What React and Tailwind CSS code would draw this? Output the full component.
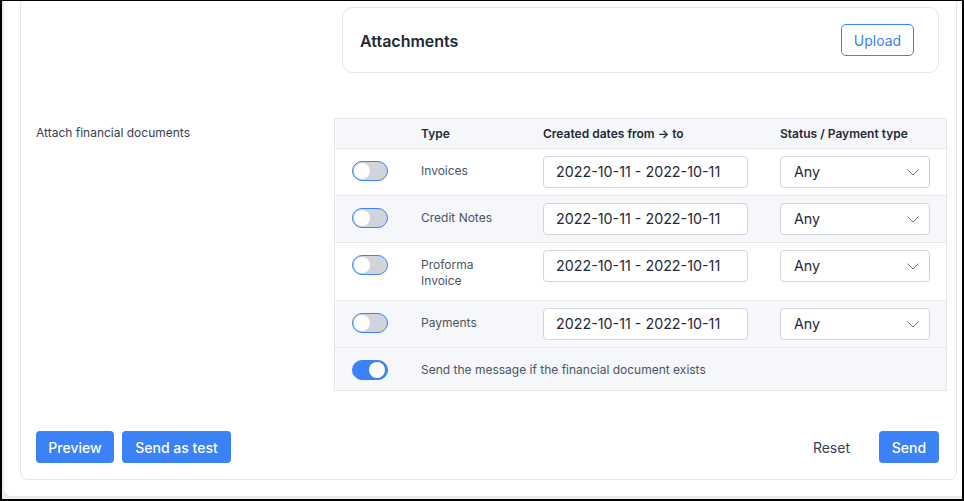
import React from "react";

function Toggle({ on }) {
  return on ? (
    <div className="w-9 h-5 rounded-full bg-[#3b82f6] border border-[#3b82f6] flex items-center justify-end pr-[2px]">
      <div className="w-[16px] h-[16px] rounded-full bg-white" />
    </div>
  ) : (
    <div className="w-9 h-5 rounded-full bg-[#d1d5db] border-[1.5px] border-[#3b82f6] flex items-center pl-[1px]">
      <div className="w-[16px] h-[16px] rounded-full bg-white" />
    </div>
  );
}

function Chevron() {
  return (
    <svg width="12" height="7" viewBox="0 0 12 7" fill="none">
      <polyline points="0.5,0.5 6,6 11.5,0.5" stroke="#6b7280" strokeWidth="1" />
    </svg>
  );
}

function Row({ label, gray }) {
  return (
    <div className={"flex border-t border-[#e5e7eb] " + (gray ? "bg-[#f6f7fa]" : "bg-white")}>
      <div className="w-[70px] pl-[17px] pt-3">
        <Toggle on={false} />
      </div>
      <div className="w-[122px] px-4 pt-[14px] pb-[11px] text-[12px] leading-4 text-[#4b5563]">{label}</div>
      <div className="w-[237px] pl-4 pt-[7px] pb-[7px]">
        <div className="w-[205px] h-8 border border-[#d1d5db] rounded-[4px] bg-white flex items-center pl-3 text-[14.3px] text-[#1f2937]">
          2022-10-11 - 2022-10-11
        </div>
      </div>
      <div className="w-[182px] pl-4 pt-[7px] pb-[7px]">
        <div className="w-[150px] h-8 border border-[#d1d5db] rounded-[4px] bg-white flex items-center justify-between pl-[13px] pr-[10px] text-[14.3px] text-[#1f2937]">
          <span>Any</span>
          <Chevron />
        </div>
      </div>
    </div>
  );
}

export default function App() {
  return (
    <div className="w-[964px] h-[501px] border-t border-l-2 border-r-2 border-b-2 border-black bg-[#eceef2] font-['Inter',sans-serif] overflow-hidden">
      <div className="h-full pl-[1px] pb-[2px] flex flex-col">
        <div className="flex-1 bg-white border-l border-b border-[#e5e7eb] rounded-bl-lg pl-4 pb-4 flex flex-col">
          <div className="flex-1 w-[937px] border-l border-r border-b border-[#e5e7eb] rounded-b-lg pl-[15px] pr-[9px] pb-4 flex flex-col">
            <div className="mt-[6px] ml-[306px] w-[597px] h-[66px] border border-[#e5e7eb] rounded-[10px] flex items-center justify-between pl-[17px] pr-[24px]">
              <div className="text-[16px] font-semibold text-[#1f2937] pt-[1px]">Attachments</div>
              <div className="w-[73px] h-[32px] border border-[#3b82f6] rounded-[5px] flex items-center justify-center text-[14px] text-[#3b82f6]">
                Upload
              </div>
            </div>
            <div className="flex mt-[45px]">
              <div className="w-[298px] shrink-0 pt-[7px] text-[12px] leading-4 text-[#374151]">Attach financial documents</div>
              <div className="w-[613px] shrink-0 border-b border-l border-r border-[#e5e7eb]">
                <div className="flex border-t border-[#e5e7eb] bg-[#f6f7fa] h-[30px] items-center pt-[1px] text-[12px] font-semibold text-[#1f2937]">
                  <div className="w-[70px]" />
                  <div className="w-[122px] px-4">Type</div>
                  <div className="w-[237px] pl-4">Created dates from → to</div>
                  <div className="w-[182px] pl-4">Status / Payment type</div>
                </div>
                <Row label="Invoices" gray={false} />
                <Row label="Credit Notes" gray={true} />
                <Row label="Proforma Invoice" gray={false} />
                <Row label="Payments" gray={true} />
                <div className="flex border-t border-[#e5e7eb] bg-[#f6f7fa]">
                  <div className="w-[70px] pl-[17px] pt-3 pb-[10px]">
                    <Toggle on={true} />
                  </div>
                  <div className="px-4 pt-[14px] text-[12px] leading-4 text-[#4b5563]">
                    Send the message if the financial document exists
                  </div>
                </div>
              </div>
            </div>
            <div className="flex-1" />
            <div className="flex items-center pr-[8px]">
              <div className="w-[78px] h-8 rounded-[4px] bg-[#3b82f6] text-white text-[14px] font-medium flex items-center justify-center">Preview</div>
              <div className="ml-2 w-[109px] h-8 rounded-[4px] bg-[#3b82f6] text-white text-[14px] font-medium flex items-center justify-center">Send as test</div>
              <div className="flex-1" />
              <div className="text-[14px] text-[#374151] mr-[29px]">Reset</div>
              <div className="w-[60px] h-8 rounded-[4px] bg-[#3b82f6] text-white text-[14px] font-medium flex items-center justify-center">Send</div>
            </div>
          </div>
        </div>
      </div>
    </div>
  );
}
